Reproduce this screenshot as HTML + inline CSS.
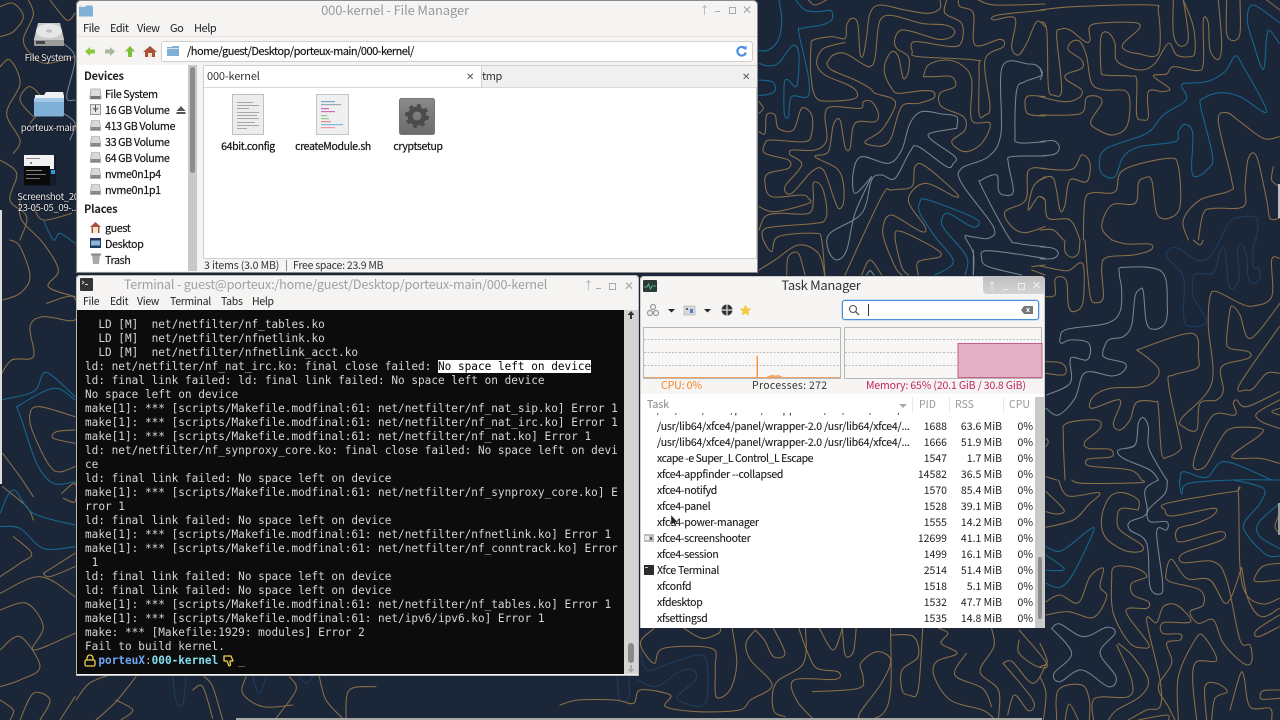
<!DOCTYPE html>
<html><head><meta charset="utf-8"><title>Desktop</title>
<style>
html,body{margin:0;padding:0;width:1280px;height:720px;overflow:hidden;background:#1b2639}
body{position:relative;font-family:"Noto Sans CJK SC","Liberation Sans",sans-serif;font-size:11px;color:#222}
.a{position:absolute;white-space:nowrap}
.win{position:absolute;background:#f5f4f2;overflow:hidden}
.dl{position:absolute;color:#e8e8e8;font-size:9.5px;line-height:11px;letter-spacing:-.32px;text-align:center;white-space:nowrap;text-shadow:0 0 2px #000}
.mn{position:absolute;font-size:10.5px;line-height:14px;color:#222;white-space:nowrap;letter-spacing:-.3px}
.sd{position:absolute;left:105px;font-size:10.8px;letter-spacing:-.42px;line-height:16px;color:#111;white-space:nowrap;-webkit-text-stroke:.15px #111}
.hd{position:absolute;left:84px;font-size:11px;font-weight:700;letter-spacing:-.2px;line-height:16px;color:#222}
.fi{position:absolute;font-size:10.5px;line-height:14px;color:#111;text-align:center;white-space:nowrap;-webkit-text-stroke:.2px #111;letter-spacing:-.35px}
#term{position:absolute;left:85px;top:318px;font-family:"DejaVu Sans Mono","Liberation Mono",monospace;font-size:11.07px;line-height:14px;color:#d6d6d6;white-space:pre}
#term b{font-weight:700}
.r{position:absolute;left:640px;width:396px;height:16px;line-height:16px;font-size:10.5px;color:#1a1a1a}
.r span{position:absolute;white-space:nowrap}
.r .n{left:17px;letter-spacing:-.28px;-webkit-text-stroke:.12px #1a1a1a}.r .p{right:89px}.r .m{right:34px;}.r .c{right:3px}
svg{position:absolute;overflow:visible}
</style></head><body>
<svg id="wp" width="1280" height="720" style="left:0;top:0" fill="none" stroke-linejoin="round" stroke-linecap="round"></svg>
<script>
var G='#8a7048',B='#17698f',P='#76868f',D='#1d3e60';
var L=[
[0,0,1/3,1/3,[
[G,[0,20,40,10,70,50,40,95,0,110]],
[G,[85,0,100,45,70,120,100,170,140,190,225,170]],
[G,[0,200,30,180,60,250,20,340,60,420,40,460]],
[G,[0,480,50,520,30,600,80,650,60,720]],
[P,[190,130,225,175,200,290,225,300]],
[P,[190,340,225,370,210,420]],
[G,[150,0,200,60,225,40]],
[G,[100,620,130,660,215,640]],
[G,[100,350,60,300,90,260,130,310,90,370]]
]],
[755,0,1/3,1/3,[
[B,[72,0,80,60,70,120,40,150,12,152]],
[B,[122,0,150,30,190,35,228,32,230,60,200,75,140,85,132,100,160,230,158,290,110,290,100,350,88,340,88,250,100,240,125,258,132,170,120,135,100,150,70,190,40,198,12,190]],
[B,[12,240,50,245,62,265,50,280,12,287]],
[G,[160,0,180,15,215,0]],
[G,[555,0,555,25,520,40,450,30,375,15,345,40,335,110,325,165,315,160,308,70,290,55,275,75,270,115,230,110,175,120,168,140,168,230,185,295,240,303,300,295,305,275,280,255,210,225,185,190,200,150,235,135,270,128]],
[G,[215,190,235,165,270,160,320,190,345,200,360,175,370,80,385,50,420,48,500,70,570,75,598,90,590,110,550,118,490,100,440,90,420,115,425,145,460,170,460,215,445,235,430,170,410,155,390,190,390,225,410,265,430,280,500,272,535,275,535,295,490,310,440,320,410,410,390,435,360,438,330,425,380,390,420,320,410,295,360,280,345,265,300,240,230,210,215,190]],
[G,[575,0,570,40,620,70,620,125,590,140,480,125,472,155,490,170,660,180,672,200,672,340,690,345,705,320,690,180,745,140,735,118,660,135,655,40,615,20,610,0]],
[G,[505,230,520,195,570,180,620,195,650,240,650,360,705,370,680,430,630,455,590,425,630,390,625,350,560,320,555,280,600,260,590,230,540,230,505,230]],
[G,[670,0,720,15,870,12]],[G,[870,30,730,45,715,60,780,55,770,140,790,165,815,130,845,65,870,80]],
[P,[870,425,790,428,780,400,785,270,810,245,860,225,850,200,820,192,742,200,738,400,700,470,620,505,620,550,715,680,700,715,650,710,630,710,655,760,655,825]],
[P,[870,468,770,470,760,490,775,575,745,585,730,570,725,525,680,540,680,560,760,710,790,730,870,740]],
[G,[870,290,820,288,810,310,820,342,870,348]],
[G,[870,505,820,512,812,600,750,635,770,680,810,698,870,680]],[G,[870,530,835,560,820,630,850,590,870,600]],
[P,[605,385,585,388,525,400,530,420,600,470,595,490,575,500,490,440,465,455,420,535,380,525,350,540,320,640,225,700,220,750,245,780,275,750,300,640,350,530]],
[P,[605,385,605,350,560,342,500,335,465,370,440,450,400,490,320,470,295,515,300,580,350,530]],
[G,[12,305,25,325,12,340]],
[G,[12,395,30,400,35,345,60,345,70,385,115,390,140,325,170,345,170,400,150,425,50,420,30,430,30,460,100,480,100,505,40,520,30,550,50,590,140,585,160,595,160,610,60,635,12,620]],
[G,[105,465,140,495,90,560,110,580,170,515,205,510,235,590,250,625,265,610,265,550,245,505,180,470,220,455,235,375,255,360,270,440,285,445,300,370,360,365,370,340,350,305,325,305,315,325,230,320,210,345,215,420,180,450,110,450,105,465]],
[G,[12,690,30,650,70,640,160,640,175,600,175,548,200,560,215,620,210,660,180,670,60,680,25,690,25,720,50,755,70,710,180,700,200,720,210,830]],
[G,[12,810,60,780,130,735,190,760,210,830]],[G,[95,825,100,770,130,760,150,825]],
[G,[270,825,380,590,410,570,470,560,480,500,510,498,600,575,600,590,510,550,460,600,510,680,500,695,440,660,410,645,390,660,385,710,420,800,440,825]],
[G,[490,825,490,785,555,770,540,745,440,695,420,710,440,800,460,825]],
[B,[540,825,595,785,540,710,495,640,495,605,520,600,660,655,665,680,640,675,580,640,560,660,570,690,635,770,630,825]],
[P,[655,750,655,825]],[P,[870,775,700,752,680,775,700,800,800,825]],
[G,[320,825,345,780,380,825]],[P,[335,825,345,812,357,825]],[G,[830,800,870,795]],[G,[830,810,870,825]]
]],
[1040,0,1/3,1/3,[
[G,[0,30,100,20,330,15,355,35,355,160,290,160,255,150,250,130,298,85,285,68,200,68,150,78,150,120,135,125,90,90,60,88,50,110,65,270,40,285,25,260,20,90,0,65]],
[G,[0,290,70,305,115,295,125,270,80,240,80,222,125,205,125,180,85,150,95,125,120,125,140,170,155,250,195,270,255,272,270,310,260,380,220,405,175,390,152,365,185,310,175,290,140,292,130,335,90,345,0,345]],
[G,[400,0,400,100,420,138,445,115,430,0]],
[G,[535,0,545,130,535,178,510,150,505,70,490,60,490,190,470,212,400,200,380,222,340,228,388,265,370,275,325,275,325,350,310,360,290,345,290,240,270,228,195,225,183,210,183,110,205,98,225,130,232,185,300,210,345,190,385,130,410,165,450,170,465,155,460,80,430,0]],
[G,[560,0,560,100,580,122,600,100,600,0]],
[B,[718,68,640,15,622,60,640,130,670,208,680,110,690,92,718,130]],
[G,[680,0,720,30]],
[B,[430,250,500,245,555,215,585,168,610,200,680,335,600,290,540,278,490,295,482,320,518,470,500,510,470,530,455,510,458,400,435,373,415,395,405,425,300,440,250,470,225,530,190,525,178,490,200,445,320,400,370,345,438,300,425,260,430,250]],
[G,[718,410,670,415,600,365,560,338,535,365,575,540,570,572,480,600,430,660,445,720]],
[G,[718,655,690,655,680,600,650,470,625,475,615,560,610,620,520,625,490,640,475,720]],
[G,[700,500,695,540,718,560]],
[G,[0,505,95,508,125,465,150,490,140,545,90,540,75,615,60,630,40,535,0,540]],
[G,[130,720,135,600,160,578,225,575,250,510,385,475,415,500,420,620,385,655,350,640,335,540,310,535,295,550,285,610,215,615,185,680,215,720]],
[G,[0,590,15,600,25,655,90,660,120,720]],[G,[0,690,40,690,70,720]],
[P,[0,425,40,422,58,440,45,462,0,468]],[P,[0,205,6,225,0,240]],
[D,[540,720,570,665,610,650,650,655,652,700,645,720]]
]],
[1040,240,1/3,1/3,[
[P,[0,20,40,25,55,40,40,55,0,57]],
[G,[75,0,75,35,95,52,115,40,120,0]],
[G,[215,0,260,12,330,12,332,30,280,45,200,52,185,85,190,170,170,188,150,165,135,0]],
[G,[0,78,60,90,90,90,120,68,132,90,128,190,100,215,85,195,80,125,60,110,45,120,45,165,18,170]],
[P,[20,465,90,430,90,365,100,352,140,360,152,330,140,305,90,300,65,310,60,295,80,268,200,250,240,215,245,150,238,100,250,82,365,95,382,200,375,250,345,268,320,250,310,155,300,148,285,170,275,255,250,290,205,300,188,340,200,355,255,370,250,395,215,408,135,398,105,475,55,525,18,505]],
[D,[540,0,510,50,470,60,405,22,380,50,430,110,430,220,445,258,500,245,460,170,460,115,475,100,520,98,540,35,555,30,565,130,580,145,598,110,592,30,605,12,620,50,625,115,645,130,660,110,655,85,640,80,640,20,650,0]],
[G,[460,0,480,15,490,0]],
[G,[718,55,695,60,695,170,640,198,600,190,530,155,510,170,505,260,515,430,425,535,430,560,470,570,480,490,530,480,550,450,545,380,625,355,625,335,570,325,560,300,570,210,580,200,600,225,632,295,720,190]],
[G,[290,330,455,280,475,350,470,385,400,405,385,430,420,600,420,630,385,650,365,640,355,500,345,485,290,487,270,540,240,570,220,550,240,480,155,505,160,470,210,445,310,440,350,415,355,385,325,355,290,330]],
[G,[718,400,680,400,640,445,620,450,598,435,718,260]],
[G,[718,670,660,655,575,650,660,585,660,565,575,565,540,600,495,680,460,670,515,530,585,525,580,490,590,480,620,500,718,455]],
[G,[718,505,695,515,718,525]],[G,[718,480,650,520,665,545,718,565]],
[G,[75,720,70,590,80,550,170,540,180,565,135,605,145,625,210,628,215,650,160,655,140,660,150,678,270,690,305,720]],
[P,[380,720,350,670,325,620,325,560,310,533,295,550,285,615,235,630,250,655,330,690,355,720]],
[B,[420,720,430,695,500,712,555,665,695,720]],
[G,[18,365,60,368,78,385,70,405,18,400]],[G,[18,595,25,605,18,620]],[G,[18,710,50,720]]
]],
[1040,480,1/3,1/3,[
[B,[718,0,580,0,445,10,425,42,418,0]],
[B,[580,0,670,25,660,70,612,130,625,170,680,225,718,228]],
[B,[718,70,655,130,660,170,718,205]],
[P,[355,0,315,30,320,100,270,125,270,150,320,190,330,320,360,342,368,310,350,155,380,150,380,125,330,125,325,90,375,40,382,0]],
[G,[55,0,85,48,178,38,145,75,100,120,18,142]],
[G,[18,35,72,90,50,102,18,95]],[G,[95,0,130,10,300,8,305,0]],
[G,[295,90,295,60,250,38,210,50,185,110,195,170,250,210,300,215,305,195,240,150,232,110,245,85,295,90]],
[G,[375,90,380,70,580,35,595,40,600,260,620,345,670,372,718,355]],
[G,[375,90,395,108,520,85,520,105,470,130,415,145,408,175,430,185,540,155,545,180,430,220,430,248,520,245,560,300,600,480,630,495,635,545,610,550,550,490,520,420,475,430,450,395,490,375,480,330,390,305,378,280,395,238,440,295,510,300,560,370,605,262]],
[G,[718,250,670,258,645,290,650,305,718,300]],
[G,[718,405,650,450,655,470,718,440]],
[G,[605,262,625,360,665,410,718,385]],
[G,[718,100,705,140,718,160]],
[G,[18,365,60,345,115,368,150,290,190,265,180,320,200,350,160,412,85,395,18,405]],
[B,[18,200,65,212,150,148,158,160,100,280,60,322,18,310]],[B,[18,225,72,265,50,272,18,270]],
[P,[35,445,60,432,130,470,200,442,225,460,180,518,228,590,205,620,125,570,60,605,42,580,95,520,35,445]],
[G,[265,720,320,690,360,680,360,600,320,420,350,428,370,380,410,375,452,425,370,428,368,460,420,462,420,480,380,490,395,550,355,620,385,680,405,720]],
[G,[235,490,280,530,325,600,300,650,230,690,205,720]],
[G,[230,495,275,600,265,650,165,655,160,720]],
[G,[320,505,270,490,220,400,215,300,225,260,290,265,320,290,275,310,280,345,325,365,320,385,265,385,265,410,325,490,320,505]],
[G,[415,720,415,590,465,480,490,468,530,540,470,545,458,600,470,720]],
[G,[500,720,495,620,530,610,562,635,525,655,515,720]],
[G,[570,690,600,585,612,590,630,680,690,685,695,720]],
[G,[718,630,670,632,660,650,670,658,718,655]],
[G,[0,590,18,640,10,720]],[G,[0,490,22,545,0,560]],
[G,[50,720,55,630,125,615,148,660,148,720]],[G,[75,720,88,672,115,720]],
[G,[295,720,380,705,385,720]]
]],
[560,620,1/2.178,1/3,[
[G,[205,25,175,70,205,130,225,85,330,85,338,140,340,230,370,210,385,130,375,25]],
[G,[270,25,310,55,345,40,350,25]],
[D,[175,95,190,150,240,130,300,105,320,130,315,252,255,235,295,180,290,150,260,155,210,200,170,180]],
[D,[125,170,130,240,150,230,150,170]],
[G,[425,30,445,60,465,110,490,100,465,25]],
[G,[425,30,405,70,415,120,462,195,415,240,390,270,300,275,230,260,240,225,175,210,160,250,120,240,40,240,0,255]],
[G,[535,25,530,130,470,190,465,270,490,290]],
[G,[520,25,540,100,560,145,605,155,600,178,510,180,515,240,550,295]],
[G,[565,25,595,90,615,25]],[G,[615,25,620,100,630,110,640,90,645,25]],
[G,[550,215,650,205,660,170,655,130,690,95,720,120,700,190,650,290,700,285,720,210,720,25]],
[G,[720,45,770,50,780,110,745,150,745,210,760,225,780,210,790,25]],
[G,[825,25,845,40,830,70,865,100,820,125,815,170,850,240,920,270,945,295]],
[G,[940,25,945,80,915,155,955,210,955,295]],
[G,[885,100,860,165,920,205,940,260]],
[G,[1000,30,1060,130,1040,140,1000,100,1000,60]],
[G,[965,130,985,125,1030,190,1060,130]],
[G,[965,130,1030,240,1020,272,990,225,975,285]]
]],
[0,200,1/3,1/3,[
[G,[60,0,65,60,130,130,175,210,145,260,225,290]],
[G,[30,120,60,140,90,230,60,280,8,300]],
[B,[130,60,160,120,180,100,225,130]],
[G,[140,310,220,290,225,360,130,350,90,380,100,470,35,480,0,530]],
[B,[225,590,160,530,130,520,100,575,0,600]],
[B,[50,620,160,565,225,600]],
[B,[50,620,65,660,110,790,160,850,225,845]],
[G,[225,690,170,695,160,715,225,730]],
[G,[225,650,120,620,90,640,100,700,160,810,225,800]],
[G,[8,860,80,920,100,960]],[G,[8,760,60,830,100,890]],
[B,[0,940,40,870,100,940,225,975]],
[B,[0,980,60,985,130,1045,225,1040]],
[G,[0,1130,60,1090,95,1060,40,1010]],
[G,[130,1120,225,1060]],[G,[130,1120,150,1130,225,1100]],
[G,[0,1180,120,1130,225,1190]],
[G,[185,880,225,850,225,905,190,895]],
[G,[0,1230,80,1210,130,1280,100,1350,225,1300]],
[G,[0,1350,60,1310,120,1400,60,1440,0,1460]],
[G,[60,1560,100,1480,150,1500,120,1560]],[G,[180,1560,225,1490]],[G,[0,1500,40,1530,30,1560]]
]],
[76,620,1/3,1/3,[
[G,[0,240,40,190,100,165]],[G,[120,240,170,270,135,300]],[G,[60,300,120,245,180,170]],
[D,[290,170,300,240,320,255,330,170]],
[G,[385,170,410,200,440,300]],[G,[510,170,500,220,560,260,650,255]],[G,[640,170,660,210,600,295]],
[D,[530,170,550,220,570,170]],[D,[670,170,690,190,710,170]],
[G,[730,170,750,240,800,295]],[G,[810,295,820,210,900,200]],[G,[350,210,380,200,410,295]]
]]];
function cr(p){var n=p.length/2,d='M'+p[0]+' '+p[1];function g(i){i=Math.max(0,Math.min(n-1,i));return[p[2*i],p[2*i+1]]}
for(var i=0;i<n-1;i++){var a=g(i-1),b=g(i),c=g(i+1),e=g(i+2);
d+='C'+(b[0]+(c[0]-a[0])/6).toFixed(1)+' '+(b[1]+(c[1]-a[1])/6).toFixed(1)+' '+(c[0]-(e[0]-b[0])/6).toFixed(1)+' '+(c[1]-(e[1]-b[1])/6).toFixed(1)+' '+c[0]+' '+c[1]}return d}
var s='';L.forEach(function(l){s+='<g transform="translate('+l[0]+','+l[1]+') scale('+l[2]+','+l[3]+')">';l[4].forEach(function(q){s+='<path d="'+cr(q[1])+'" stroke="'+q[0]+'" stroke-width="1.05" vector-effect="non-scaling-stroke"/>'});s+='</g>'});
document.getElementById('wp').innerHTML=s;
</script>

<div class="a" style="left:0;top:210px;width:2px;height:274px;background:#dcdcdc"></div>
<div class="a" style="left:1278px;top:184px;width:2px;height:34px;background:#bdbdbd"></div>
<div class="a" style="left:1278px;top:503px;width:2px;height:32px;background:#9a9a9a"></div>
<div class="a" style="left:236px;top:718px;width:806px;height:2px;background:#a8a8a4"></div>

<!-- desktop icons -->
<svg style="left:32px;top:20px" width="34" height="28" viewBox="0 0 34 28"><path d="M6 3h22l4 16v7H2v-7z" fill="#c9c9c9"/><ellipse cx="17" cy="11" rx="13" ry="7" fill="#e6e6e6"/><ellipse cx="17" cy="11" rx="3" ry="1.6" fill="#bdbdbd"/><rect x="2" y="20" width="30" height="6" fill="#9b9b9b"/><rect x="4" y="21" width="9" height="3" fill="#444"/></svg>
<div class="dl" style="left:16px;top:52px;width:64px">File System</div>
<svg style="left:33px;top:91px" width="32" height="26" viewBox="0 0 32 26"><path d="M2 4h9l2-3h17l1 4v3H2z" fill="#eef1f4"/><path d="M1 7h30v17a1.500 1.500 0 0 1-1.500 1.500h-27A1.500 1.500 0 0 1 1 24z" fill="#7fb0d8"/><path d="M1 7h30v4H1z" fill="#a3c9e6"/></svg>
<div class="dl" style="left:17px;top:122px;width:64px">porteux-main</div>
<svg style="left:24px;top:155px" width="32" height="31" viewBox="0 0 32 31"><rect width="32" height="31" fill="#141c2b"/><rect x="0" y="0" width="30" height="14" fill="#f2f2f2"/><rect x="0" y="11" width="26" height="19" fill="#0a0a0a"/><rect x="2" y="3" width="14" height="1" fill="#888"/><rect x="6" y="7" width="2" height="2" fill="#888"/><rect x="2" y="15" width="16" height="1" fill="#888"/><rect x="2" y="19" width="20" height="1" fill="#777"/><rect x="2" y="23" width="14" height="1" fill="#777"/><rect x="27" y="15" width="4" height="4" fill="#2a9ad8"/></svg>
<div class="dl" style="left:16px;top:191px;width:64px">Screenshot_20<br>23-05-05_09-...</div>

<!-- FILE MANAGER -->
<div class="win" style="left:76px;top:0;width:682px;height:273px;border-radius:5px 5px 0 0;box-shadow:0 0 0 1px #8a8a8a inset"></div>
<svg style="left:79px;top:5px" width="14" height="12" viewBox="0 0 14 12"><path d="M0 2h6l1-1.500h6L14 3v8.500H0z" fill="#7eb0d8"/><path d="M0 0.500h5V2H0z" fill="#d9e3ec"/></svg>
<div class="a" style="left:76px;width:682px;top:1px;text-align:center;font-size:13px;letter-spacing:-.15px;line-height:17px;color:#9a9a9a;padding-right:44px;box-sizing:border-box">000-kernel - File Manager</div>
<div class="a" style="left:699px;top:3px;color:#b0b0b0;font-size:11px;line-height:14px">↑</div>
<div class="a" style="left:715px;top:11px;width:5px;height:1px;background:#aaa"></div>
<div class="a" style="left:729px;top:7px;width:5px;height:5px;border:1px solid #aaa"></div>
<div class="a" style="left:742px;top:2px;color:#a8a8a8;font-size:12px;line-height:16px">✕</div>

<div class="mn" style="left:83px;top:21px;font-size:11px;letter-spacing:-.45px">File</div>
<div class="mn" style="left:110px;top:21px;font-size:11px;letter-spacing:-.45px">Edit</div>
<div class="mn" style="left:137px;top:21px;font-size:11px;letter-spacing:-.45px">View</div>
<div class="mn" style="left:170px;top:21px;font-size:11px;letter-spacing:-.45px">Go</div>
<div class="mn" style="left:194px;top:21px;font-size:11px;letter-spacing:-.45px">Help</div>
<div class="a" style="left:77px;top:36px;width:680px;height:1px;background:#e3e2e0"></div>

<svg style="left:84px;top:45px" width="76" height="13" viewBox="0 0 76 13"><path d="M1 6.500L6 2v2.500h5v4H6V11z" fill="#8cc63f"/><path d="M31 6.500L26 2v2.500h-5v4h5V11z" fill="#a9b89a"/><path d="M46 1l5 5.500h-3V12h-4V6.500h-3z" fill="#7fbf3a"/><path d="M66 1l7 6h-2v5h-4V8.500h-2V12h-4V7h-2z" fill="#a8523a"/><path d="M64 8h4v4h-4z" fill="#f0e2c8"/></svg>

<div class="a" style="left:161px;top:41px;width:590px;height:19px;background:#fff;border:1px solid #d2d0cc;border-radius:3px"></div>
<svg style="left:167px;top:46px" width="12" height="10" viewBox="0 0 12 10"><path d="M0 1h4.500l1-1H12v10H0z" fill="#7eb0d8"/><path d="M0 2h12v1H0z" fill="#cfe0ee"/></svg>
<div class="a" style="left:187px;top:43px;font-size:11px;letter-spacing:-.52px;line-height:16px;color:#111;-webkit-text-stroke:.15px #111">/home/guest/Desktop/porteux-main/000-kernel/</div>
<svg style="left:736px;top:45px" width="11" height="12" viewBox="0 0 11 12"><path d="M9 3.500A4.300 4.300 0 1 0 9.800 7.500" fill="none" stroke="#4a90e2" stroke-width="2.200"/><path d="M6.500 3.500l4-3v4.500z" fill="#4a90e2"/></svg>

<!-- side pane -->
<div class="a" style="left:78px;top:65px;width:110px;height:206px;background:#fff"></div>
<div class="a" style="left:188px;top:65px;width:9px;height:206px;background:#c8c8c6"></div>
<div class="a" style="left:190px;top:67px;width:5px;height:106px;background:#8d8d8d;border-radius:3px"></div>
<div class="hd" style="top:68px">Devices</div>
<div class="sd" style="top:86px">File System</div>
<div class="sd" style="top:102px">16 GB Volume</div>
<div class="sd" style="top:118px">413 GB Volume</div>
<div class="sd" style="top:134px">33 GB Volume</div>
<div class="sd" style="top:150px">64 GB Volume</div>
<div class="sd" style="top:166px">nvme0n1p4</div>
<div class="sd" style="top:182px">nvme0n1p1</div>
<div class="hd" style="top:201px">Places</div>
<div class="sd" style="top:220px">guest</div>
<div class="sd" style="top:236px">Desktop</div>
<div class="sd" style="top:252px">Trash</div>
<svg style="left:90px;top:88px" width="12" height="180" viewBox="0 0 12 180">
<g><path d="M1 1h9l1 7v3H0V8z" fill="#ddd" stroke="#888" stroke-width=".6"/><rect x="0.500" y="8" width="10" height="3" fill="#777"/></g>
<g transform="translate(0,16)"><rect x=".5" y=".5" width="10" height="10" fill="#e4e4e4" stroke="#999"/><path d="M5.500 1v7M3 4l2.500 2L8 4" stroke="#555" fill="none"/></g>
<g transform="translate(0,32)"><path d="M1.500 .5h8l1 7v3H.5v-3z" fill="#d8d8d8" stroke="#999" stroke-width=".6"/><rect x=".5" y="7" width="10" height="3.500" fill="#888"/></g>
<g transform="translate(0,48)"><path d="M1.500 .5h8l1 7v3H.5v-3z" fill="#d8d8d8" stroke="#999" stroke-width=".6"/><rect x=".5" y="7" width="10" height="3.500" fill="#888"/></g>
<g transform="translate(0,64)"><path d="M1.500 .5h8l1 7v3H.5v-3z" fill="#d8d8d8" stroke="#999" stroke-width=".6"/><rect x=".5" y="7" width="10" height="3.500" fill="#888"/></g>
<g transform="translate(0,80)"><path d="M1.500 .5h8l1 7v3H.5v-3z" fill="#d8d8d8" stroke="#999" stroke-width=".6"/><rect x=".5" y="7" width="10" height="3.500" fill="#888"/></g>
<g transform="translate(0,96)"><path d="M1.500 .5h8l1 7v3H.5v-3z" fill="#d8d8d8" stroke="#999" stroke-width=".6"/><rect x=".5" y="7" width="10" height="3.500" fill="#888"/></g>
<g transform="translate(0,134)"><path d="M5.500 0L11 5H9.500v6h-8V5H0z" fill="#a8523a"/><rect x="3" y="5" width="5" height="6" fill="#f4e6cc"/></g>
<g transform="translate(0,150)"><rect width="11" height="10" fill="#1e3a5c"/><rect x="1" y="2.500" width="9" height="5" fill="#8db6d8"/></g>
<g transform="translate(1,165)"><path d="M1 2h8l-1 9H2z" fill="#aaa"/><rect x="0" y="0.500" width="10" height="2" fill="#888"/></g>
</svg>
<svg style="left:176px;top:105px" width="10" height="10" viewBox="0 0 10 10"><path d="M5 1l4.500 5h-9z" fill="#555"/><rect x=".5" y="7" width="9" height="2" fill="#555"/></svg>

<!-- main pane -->
<div class="a" style="left:203px;top:65px;width:554px;height:194px;background:#fff;border:1px solid #cfcecb;box-sizing:border-box"></div>
<div class="a" style="left:204px;top:66px;width:276px;height:21px;background:#fff"></div>
<div class="a" style="left:481px;top:66px;width:275px;height:21px;background:#f0f0f0;border-left:1px solid #cfcfcf"></div>
<div class="a" style="left:204px;top:87px;width:552px;height:1px;background:#d8d8d8"></div>
<div class="a" style="left:207px;top:68px;font-size:11px;letter-spacing:-.15px;line-height:16px;color:#333">000-kernel</div>
<div class="a" style="left:482px;top:68px;font-size:11px;letter-spacing:-.4px;line-height:16px;color:#333">tmp</div>
<div class="a" style="left:466px;top:68px;font-size:10px;line-height:16px;color:#555">✕</div>
<div class="a" style="left:742px;top:68px;font-size:10px;line-height:16px;color:#555">✕</div>

<svg style="left:232px;top:94px" width="32" height="41" viewBox="0 0 32 41"><rect x=".5" y=".5" width="31" height="40" fill="#ececec" stroke="#c0c0c0"/><g fill="#a8a8a8"><rect x="5" y="8" width="16" height="1"/><rect x="5" y="11" width="22" height="1"/><rect x="5" y="14" width="12" height="1"/><rect x="5" y="18" width="22" height="1"/><rect x="5" y="21" width="20" height="1"/><rect x="5" y="24" width="22" height="1"/><rect x="5" y="28" width="18" height="1"/><rect x="5" y="31" width="22" height="1"/><rect x="5" y="34" width="10" height="1"/></g></svg>
<svg style="left:316px;top:94px" width="33" height="41" viewBox="0 0 33 41"><rect x=".5" y=".5" width="32" height="40" fill="#efefef" stroke="#c4c4c4"/><g><rect x="5" y="7" width="14" height="1.200" fill="#7aa7cc"/><rect x="5" y="10" width="20" height="1.200" fill="#9ab"/><rect x="5" y="14" width="8" height="1.200" fill="#c870c0"/><rect x="5" y="17" width="14" height="1.200" fill="#c870c0"/><rect x="5" y="21" width="6" height="1.200" fill="#8c8"/><rect x="5" y="24" width="8" height="1.200" fill="#8c8"/><rect x="5" y="27" width="10" height="1.200" fill="#e88"/><rect x="5" y="30" width="22" height="1.200" fill="#7bd"/><rect x="5" y="33" width="14" height="1.200" fill="#e9a"/></g></svg>
<svg style="left:399px;top:98px" width="37" height="37" viewBox="0 0 37 37"><defs><linearGradient id="gg" x1="0" y1="0" x2="0" y2="1"><stop offset="0" stop-color="#8a8a8a"/><stop offset="1" stop-color="#6b6b6b"/></linearGradient></defs><rect x=".5" y=".5" width="35" height="36" rx="2" fill="url(#gg)" stroke="#777"/><circle cx="18" cy="18" r="7" fill="none" stroke="#4b4b4b" stroke-width="5"/><circle cx="18" cy="18" r="10.500" fill="none" stroke="#4b4b4b" stroke-width="3" stroke-dasharray="4 4.200"/></svg>
<div class="fi" style="left:208px;top:140px;width:80px">64bit.config</div>
<div class="fi" style="left:283px;top:140px;width:100px">createModule.sh</div>
<div class="fi" style="left:378px;top:140px;width:80px">cryptsetup</div>
<div class="a" style="left:204px;top:258px;font-size:10.5px;letter-spacing:-.12px;line-height:15px;color:#333">3 items (3.0 MB)</div>
<div class="a" style="left:286px;top:260px;width:1px;height:11px;background:#888"></div>
<div class="a" style="left:293px;top:258px;font-size:10.5px;letter-spacing:-.25px;line-height:15px;color:#333">Free space: 23.9 MB</div>

<!-- TERMINAL -->
<div class="win" style="left:76px;top:275px;width:563px;height:401px;border-radius:4px 4px 0 0;box-shadow:0 0 0 1px #bbb inset"></div>
<svg style="left:80px;top:278px" width="13" height="13" viewBox="0 0 13 13"><rect width="13" height="13" rx="1" fill="#333"/><path d="M2 3l2 1.500L2 6" stroke="#ddd" fill="none" stroke-width=".8"/><rect x="5" y="6" width="3" height="1" fill="#ddd"/></svg>
<div class="a" style="left:76px;width:563px;top:275px;text-align:center;font-size:12.6px;letter-spacing:-.19px;line-height:17px;color:#a0a0a0;padding-right:44px;box-sizing:border-box">Terminal - guest@porteux:/home/guest/Desktop/porteux-main/000-kernel</div>
<div class="a" style="left:583px;top:278px;color:#b0b0b0;font-size:11px;line-height:14px">↑</div>
<div class="a" style="left:596px;top:288px;width:5px;height:1px;background:#aaa"></div>
<div class="a" style="left:609px;top:283px;width:5px;height:5px;border:1px solid #aaa"></div>
<div class="a" style="left:624px;top:278px;color:#a8a8a8;font-size:12px;line-height:16px">✕</div>
<div class="mn" style="left:83px;top:295px">File</div>
<div class="mn" style="left:110px;top:295px">Edit</div>
<div class="mn" style="left:137px;top:295px">View</div>
<div class="mn" style="left:170px;top:295px">Terminal</div>
<div class="mn" style="left:221px;top:295px">Tabs</div>
<div class="mn" style="left:252px;top:295px">Help</div>
<div class="a" style="left:77px;top:310px;width:547px;height:364px;background:#0c0c0c"></div>
<div class="a" style="left:624px;top:310px;width:14px;height:364px;background:#d4d4d2"></div>
<div class="a" style="left:628px;top:643px;width:6px;height:20px;background:#8a8a8a;border-radius:3px"></div>
<svg style="left:627px;top:311px" width="8" height="9" viewBox="0 0 8 9"><path d="M4 0l3.500 4H5v4H3V4H.5z" fill="#333"/></svg>
<svg style="left:627px;top:664px" width="8" height="9" viewBox="0 0 8 9"><path d="M4 9L.5 5H3V1h2v4h2.500z" fill="#aaa"/></svg>
<div id="term">  LD [M]  net/netfilter/nf_tables.ko
  LD [M]  net/netfilter/nfnetlink.ko
  LD [M]  net/netfilter/nfnetlink_acct.ko
ld: net/netfilter/nf_nat_irc.ko: final close failed: <span style="background:#fff;color:#000">No space left on device</span>
ld: final link failed: ld: final link failed: No space left on device
No space left on device
make[1]: *** [scripts/Makefile.modfinal:61: net/netfilter/nf_nat_sip.ko] Error 1
make[1]: *** [scripts/Makefile.modfinal:61: net/netfilter/nf_nat_irc.ko] Error 1
make[1]: *** [scripts/Makefile.modfinal:61: net/netfilter/nf_nat.ko] Error 1
ld: net/netfilter/nf_synproxy_core.ko: final close failed: No space left on devi
ce
ld: final link failed: No space left on device
make[1]: *** [scripts/Makefile.modfinal:61: net/netfilter/nf_synproxy_core.ko] E
rror 1
ld: final link failed: No space left on device
make[1]: *** [scripts/Makefile.modfinal:61: net/netfilter/nfnetlink.ko] Error 1
make[1]: *** [scripts/Makefile.modfinal:61: net/netfilter/nf_conntrack.ko] Error
 1
ld: final link failed: No space left on device
ld: final link failed: No space left on device
make[1]: *** [scripts/Makefile.modfinal:61: net/netfilter/nf_tables.ko] Error 1
make[1]: *** [scripts/Makefile.modfinal:61: net/ipv6/ipv6.ko] Error 1
make: *** [Makefile:1929: modules] Error 2
Fail to build kernel.
  <b style="color:#6ea8f5">porteuX</b><span style="color:#bbb">:</span><b style="color:#86dff0">000-kernel</b>   <span style="color:#bbb">_</span></div>
<svg style="left:84px;top:654px" width="12" height="13" viewBox="0 0 12 13"><path d="M3 6V4a3 3 0 0 1 6 0v2" fill="none" stroke="#f0d050" stroke-width="1.300"/><rect x="1" y="6" width="10" height="6" rx="1.500" fill="none" stroke="#f0d050" stroke-width="1.300"/></svg>
<svg style="left:223px;top:654px" width="12" height="13" viewBox="0 0 12 13"><path d="M1 2h7l2 5H7l.5 4-1.500 1-2-5H1z" fill="none" stroke="#f0d050" stroke-width="1.300" stroke-linejoin="round"/></svg>

<!-- TASK MANAGER -->
<div class="win" style="left:640px;top:276px;width:405px;height:352px;border-radius:4px 4px 0 0;background:#f6f5f3;box-shadow:0 0 0 1px #ccc inset"></div>
<div class="a" style="left:983px;top:276px;width:62px;height:18px;background:linear-gradient(#bfbfbf,#d4d4d4);border-radius:0 4px 0 4px"></div>
<svg style="left:643px;top:280px" width="14" height="12" viewBox="0 0 14 12"><rect width="14" height="12" rx="1" fill="#2b3a36"/><path d="M1 7h3l1.500-3 2 5L9 6h4" stroke="#5fd0a0" fill="none" stroke-width=".8"/></svg>
<div class="a" style="left:640px;width:362px;top:276px;text-align:center;font-size:13px;letter-spacing:-.3px;line-height:17px;color:#333">Task Manager</div>
<div class="a" style="left:987px;top:279px;color:#f4f4f4;font-size:10px;line-height:13px">↑</div>
<div class="a" style="left:1003px;top:289px;width:5px;height:1px;background:#f0f0f0"></div>
<div class="a" style="left:1018px;top:283px;width:5px;height:5px;border:1px solid #eee"></div>
<div class="a" style="left:1032px;top:278px;color:#f2f2f2;font-size:11px;line-height:14px">✕</div>

<svg style="left:647px;top:303px" width="105" height="14" viewBox="0 0 105 14">
<g fill="none" stroke="#9a9a9a" stroke-width="1.200"><circle cx="6" cy="4" r="2.500"/><circle cx="3" cy="10" r="2.500"/><circle cx="9" cy="10" r="2.500"/></g>
<path d="M21 6h7l-3.500 3.500z" fill="#222"/>
<rect x="37" y="3" width="11" height="9" fill="#d8d8d8" stroke="#aaa" stroke-width=".6"/><rect x="39" y="5" width="2" height="2" fill="#666"/><rect x="43" y="6" width="3" height="4" fill="#4a7fd0"/>
<path d="M57 6h7l-3.500 3.500z" fill="#222"/>
<circle cx="80" cy="7" r="5.500" fill="#333"/><path d="M80 1.500v11M74.500 7h11" stroke="#ddd" stroke-width="1.200"/>
<path d="M98.500 1.500l1.800 3.700 4 .5-3 2.800.8 4-3.600-2-3.600 2 .8-4-3-2.800 4-.5z" fill="#f5c842"/>
</svg>
<div class="a" style="left:842px;top:300px;width:195px;height:18px;background:#fff;border:1px solid #4a90d9;border-radius:3px;box-shadow:0 0 0 .5px #9cc4ea"></div>
<svg style="left:848px;top:304px" width="12" height="12" viewBox="0 0 12 12"><circle cx="5" cy="5" r="3.500" fill="none" stroke="#555" stroke-width="1.100"/><path d="M7.500 7.500l3.500 3.500" stroke="#555" stroke-width="1.300"/></svg>
<div class="a" style="left:868px;top:304px;width:1px;height:12px;background:#333"></div>
<svg style="left:1021px;top:306px" width="12" height="8" viewBox="0 0 12 8"><path d="M3 0h9v8H3L0 4z" fill="#777"/><path d="M5.500 2l3 4M8.500 2l-3 4" stroke="#fff"/></svg>

<div class="a" style="left:643px;top:327px;width:198px;height:52px;background:#f7f6f5;border:1px solid #b8b8b8;box-sizing:border-box"></div>
<div class="a" style="left:844px;top:327px;width:198px;height:52px;background:#f7f6f5;border:1px solid #b8b8b8;box-sizing:border-box"></div>
<svg style="left:643px;top:327px" width="400" height="52" viewBox="0 0 400 52">
<g stroke="#bcbcbc" stroke-dasharray="2 1.500"><path d="M1 12.500h196M1 25.500h196M1 38.500h196M202 12.500h196M202 25.500h196M202 38.500h196"/></g>
<path d="M1 50.500h196" stroke="#f0a060"/><rect x="113.500" y="29" width="1.500" height="22" fill="#f59a48"/><path d="M124 50l5-2 4 1 2-1 4 2z" fill="#f5b078" stroke="#f59a48" stroke-width=".5"/>
<rect x="315" y="16.500" width="84" height="34" fill="#e2b2c4" stroke="#c2608e"/>
</svg>
<div class="a" style="left:661px;top:378px;font-size:10.5px;letter-spacing:-.1px;line-height:15px;color:#f58220">CPU: 0%</div>
<div class="a" style="left:752px;top:378px;font-size:10.5px;letter-spacing:.3px;line-height:15px;color:#333">Processes: 272</div>
<div class="a" style="left:866px;top:378px;font-size:10.5px;letter-spacing:-.15px;line-height:15px;color:#c0245f">Memory: 65% (20.1 GiB / 30.8 GiB)</div>

<div class="a" style="left:641px;top:394px;width:403px;height:234px;background:#fff"></div>
<div class="a" style="left:647px;top:397px;font-size:10.5px;line-height:15px;color:#999;font-weight:500;letter-spacing:-.2px">Task</div>
<div class="a" style="left:899px;top:404px;border:4px solid transparent;border-top:4px solid #aaa;border-bottom:0"></div>
<div class="a" style="left:912px;top:397px;width:1px;height:16px;background:#e8e8e8"></div>
<div class="a" style="left:949px;top:397px;width:1px;height:16px;background:#e8e8e8"></div>
<div class="a" style="left:1003px;top:397px;width:1px;height:16px;background:#e8e8e8"></div>
<div class="a" style="left:919px;top:397px;font-size:10.5px;line-height:15px;color:#999">PID</div>
<div class="a" style="left:955px;top:397px;font-size:10.5px;line-height:15px;color:#999">RSS</div>
<div class="a" style="left:1009px;top:397px;font-size:10.5px;line-height:15px;color:#999">CPU</div>
<div class="a" style="left:1035px;top:397px;width:9px;height:231px;background:#c9c9c7"></div>
<div class="a" style="left:1038px;top:557px;width:4px;height:62px;background:#8c8c8c;border-radius:2px"></div>

<div class="a" style="left:640px;top:413px;width:395px;height:214px;overflow:hidden">
<div style="position:absolute;left:17px;top:-11px;font-size:10.5px;line-height:16px;letter-spacing:-.18px;white-space:nowrap">/usr/lib64/xfce4/panel/wrapper-2.0 /usr/lib64/xfce4/...</div>
</div>
<div class="r" style="top:419px"><span class="n" style="letter-spacing:-.18px">/usr/lib64/xfce4/panel/wrapper-2.0 /usr/lib64/xfce4/...</span><span class="p">1688</span><span class="m">63.6 MiB</span><span class="c">0%</span></div>
<div class="r" style="top:435px"><span class="n" style="letter-spacing:-.18px">/usr/lib64/xfce4/panel/wrapper-2.0 /usr/lib64/xfce4/...</span><span class="p">1666</span><span class="m">51.9 MiB</span><span class="c">0%</span></div>
<div class="r" style="top:451px"><span class="n" style="letter-spacing:-.45px">xcape -e Super_L Control_L Escape</span><span class="p">1547</span><span class="m">1.7 MiB</span><span class="c">0%</span></div>
<div class="r" style="top:467px"><span class="n">xfce4-appfinder --collapsed</span><span class="p">14582</span><span class="m">36.5 MiB</span><span class="c">0%</span></div>
<div class="r" style="top:483px"><span class="n">xfce4-notifyd</span><span class="p">1570</span><span class="m">85.4 MiB</span><span class="c">0%</span></div>
<div class="r" style="top:499px"><span class="n">xfce4-panel</span><span class="p">1528</span><span class="m">39.1 MiB</span><span class="c">0%</span></div>
<div class="r" style="top:515px"><span class="n">xfce4-power-manager</span><span class="p">1555</span><span class="m">14.2 MiB</span><span class="c">0%</span></div>
<div class="r" style="top:531px"><span class="n">xfce4-screenshooter</span><span class="p">12699</span><span class="m">41.1 MiB</span><span class="c">0%</span></div>
<div class="r" style="top:547px"><span class="n">xfce4-session</span><span class="p">1499</span><span class="m">16.1 MiB</span><span class="c">0%</span></div>
<div class="r" style="top:563px"><span class="n">Xfce Terminal</span><span class="p">2514</span><span class="m">51.4 MiB</span><span class="c">0%</span></div>
<div class="r" style="top:579px"><span class="n">xfconfd</span><span class="p">1518</span><span class="m">5.1 MiB</span><span class="c">0%</span></div>
<div class="r" style="top:595px"><span class="n">xfdesktop</span><span class="p">1532</span><span class="m">47.7 MiB</span><span class="c">0%</span></div>
<div class="r" style="top:611px"><span class="n">xfsettingsd</span><span class="p">1535</span><span class="m">14.8 MiB</span><span class="c">0%</span></div>
<svg style="left:644px;top:534px" width="10" height="9" viewBox="0 0 10 9"><rect width="10" height="8" fill="#bbb"/><rect x="1" y="2" width="4" height="4" fill="#eee"/><rect x="6" y="3" width="2" height="3" fill="#555"/></svg>
<svg style="left:644px;top:565px" width="10" height="10" viewBox="0 0 10 10"><rect width="10" height="10" fill="#2b2b2b"/><rect x="1" y="2" width="3" height="1" fill="#ccc"/></svg>
<svg style="left:671px;top:515px" width="8" height="12" viewBox="0 0 8 12"><path d="M0 0v10l2.500-2 1.500 3.500 1.500-.7L4 7.500h3z" fill="#222" stroke="#ddd" stroke-width=".4"/></svg>
</body></html>
